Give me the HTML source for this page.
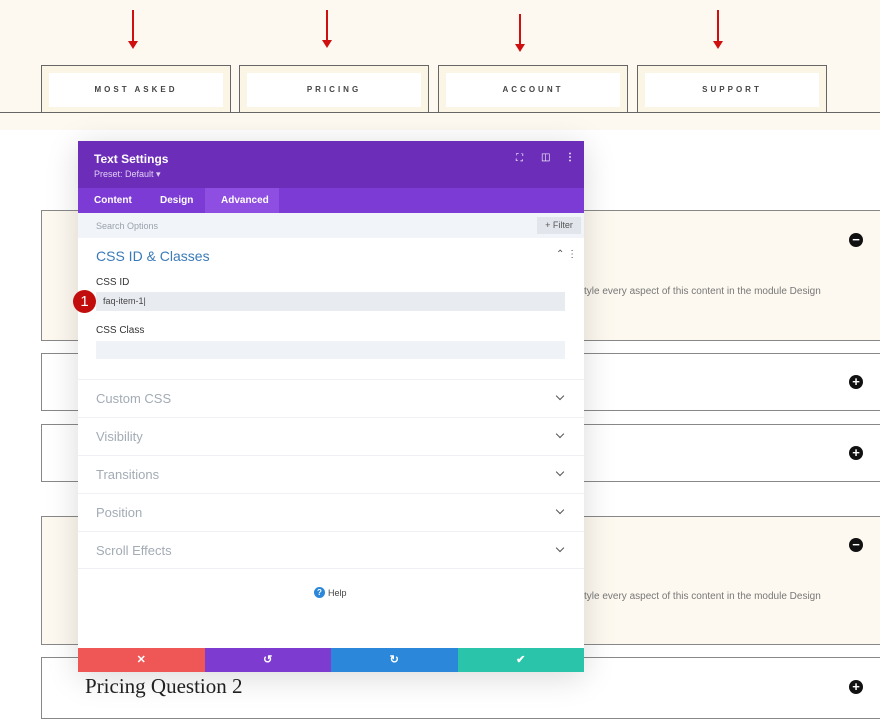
<!DOCTYPE html>
<html><head><style>
body{margin:0;width:880px;height:706px;overflow:hidden;position:relative;background:#fff;font-family:"Liberation Sans",sans-serif}
.a{position:absolute}
.top{left:0;top:0;width:880px;height:130px;background:#fdf9f0}
.line{left:0;top:112px;width:880px;height:1px;background:#666}
.tab{top:65px;width:188px;height:46px;border:1px solid #666;border-bottom:none;background:#fbf5e6}
.tab div{position:absolute;left:7px;top:7px;right:7px;height:34px;background:#fff;text-align:center;line-height:34px;font-size:8px;letter-spacing:3px;font-weight:bold;color:#444}
.arr{width:2px;background:#d01010}
.arr:after{content:"";position:absolute;left:-4px;bottom:-6px;border-left:5px solid transparent;border-right:5px solid transparent;border-top:8px solid #d01010}
.faq{left:41px;width:860px;border:1px solid #888}
.ic{width:14px;height:14px;border-radius:50%;background:#111;left:849px;color:#fff;font-size:13px;line-height:13px;text-align:center;font-weight:bold}
.txt{font-size:10px;color:#777;left:584px}
.modal{left:78px;top:141px;width:506px;height:531px;background:#fff;box-shadow:0 5px 30px rgba(0,0,0,.15)}
.sec{left:0;width:506px;height:37px;border-top:1px solid #eef0f3;font-size:13px;color:#a3abb5}
.sec span{position:absolute;left:18px;top:11px}
.sec i{position:absolute;left:479px;top:13px;width:5px;height:5px;border-right:1.5px solid #555;border-bottom:1.5px solid #555;transform:rotate(45deg)}
.btn{top:507px;width:126.5px;height:24px;color:#fff;text-align:center;line-height:24px;font-size:11px;font-weight:bold}
</style></head><body>
<div class="a top"></div>
<div class="a arr" style="left:132px;top:10px;height:33px"></div>
<div class="a arr" style="left:326px;top:10px;height:32px"></div>
<div class="a arr" style="left:519px;top:14px;height:32px"></div>
<div class="a arr" style="left:717px;top:10px;height:33px"></div>
<div class="a line"></div>
<div class="a tab" style="left:41px"><div>MOST ASKED</div></div>
<div class="a tab" style="left:239px"><div>PRICING</div></div>
<div class="a tab" style="left:438px"><div>ACCOUNT</div></div>
<div class="a tab" style="left:637px"><div>SUPPORT</div></div>

<div class="a faq" style="top:210px;height:129px;background:#fdf9f0"></div>
<div class="a faq" style="top:353px;height:56px"></div>
<div class="a faq" style="top:424px;height:56px"></div>
<div class="a faq" style="top:516px;height:127px;background:#fdf9f0"></div>
<div class="a faq" style="top:657px;height:60px"></div>
<div class="a ic" style="top:233px">−</div>
<div class="a ic" style="top:375px">+</div>
<div class="a ic" style="top:446px">+</div>
<div class="a ic" style="top:538px">−</div>
<div class="a ic" style="top:680px">+</div>
<div class="a txt" style="top:286px">tyle every aspect of this content in the module Design</div>
<div class="a txt" style="top:591px">tyle every aspect of this content in the module Design</div>
<div class="a" style="left:85px;top:674px;font-family:'Liberation Serif',serif;font-size:21px;color:#222">Pricing Question 2</div>

<div class="a modal">
 <div class="a" style="left:0;top:0;width:506px;height:47px;background:#6c2eb9"></div>
 <div class="a" style="left:16px;top:11px;color:#fff;font-size:12px;font-weight:bold">Text Settings</div>
 <div class="a" style="left:16px;top:28px;color:#e0d0f5;font-size:9px">Preset: Default ▾</div>
 <div class="a" style="left:438px;top:12px;color:#fff;font-size:10px">⛶</div>
 <div class="a" style="left:463px;top:11px;color:#fff;font-size:10px">◫</div>
 <div class="a" style="left:487px;top:11px;color:#fff;font-size:10px;font-weight:bold">⋮</div>
 <div class="a" style="left:0;top:47px;width:506px;height:25px;background:#7d3bd6"></div>
 <div class="a" style="left:127px;top:47px;width:74px;height:25px;background:#8e4ee2"></div>
 <div class="a" style="left:16px;top:54px;color:#fff;font-size:10px;font-weight:bold">Content</div>
 <div class="a" style="left:82px;top:54px;color:#fff;font-size:10px;font-weight:bold">Design</div>
 <div class="a" style="left:143px;top:54px;color:#fff;font-size:10px;font-weight:bold">Advanced</div>
 <div class="a" style="left:0;top:72px;width:506px;height:25px;background:#f1f4f8"></div>
 <div class="a" style="left:18px;top:80px;color:#99a2ad;font-size:9px">Search Options</div>
 <div class="a" style="left:459px;top:76px;width:44px;height:17px;background:#e2e6ec;color:#555;font-size:9px;line-height:17px;text-align:center">+ Filter</div>
 <div class="a" style="left:18px;top:107px;color:#3a7ab8;font-size:14px">CSS ID &amp; Classes</div>
 <div class="a" style="left:478px;top:108px;color:#555;font-size:10px">⌃ ⋮</div>
 <div class="a" style="left:18px;top:136px;color:#333;font-size:10px">CSS ID</div>
 <div class="a" style="left:18px;top:151px;width:469px;height:19px;background:#e8ecf1"></div>
 <div class="a" style="left:25px;top:155px;color:#444;font-size:9px">faq-item-1|</div>
 <div class="a" style="left:-5px;top:149px;width:23px;height:23px;border-radius:50%;background:#c20d0d;color:#fff;font-size:15px;line-height:23px;text-align:center">1</div>
 <div class="a" style="left:18px;top:184px;color:#333;font-size:10px">CSS Class</div>
 <div class="a" style="left:18px;top:200px;width:469px;height:18px;background:#eff2f6"></div>
 <div class="a sec" style="top:238px"><span>Custom CSS</span><i></i></div>
 <div class="a sec" style="top:276px"><span>Visibility</span><i></i></div>
 <div class="a sec" style="top:314px"><span>Transitions</span><i></i></div>
 <div class="a sec" style="top:352px"><span>Position</span><i></i></div>
 <div class="a sec" style="top:390px"><span>Scroll Effects</span><i></i></div>
 <div class="a" style="left:0;top:427px;width:506px;height:1px;background:#eef0f3"></div>
 <div class="a" style="left:236px;top:446px;width:11px;height:11px;border-radius:50%;background:#2b87da;color:#fff;font-size:8px;line-height:11px;text-align:center;font-weight:bold">?</div>
 <div class="a" style="left:250px;top:447px;color:#444;font-size:9px">Help</div>
 <div class="a btn" style="left:0;background:#ef5656">✕</div>
 <div class="a btn" style="left:126.5px;background:#7e3bd0">↺</div>
 <div class="a btn" style="left:253px;background:#2b87da">↻</div>
 <div class="a btn" style="left:379.5px;background:#29c4a9">✔</div>
</div>
</body></html>
